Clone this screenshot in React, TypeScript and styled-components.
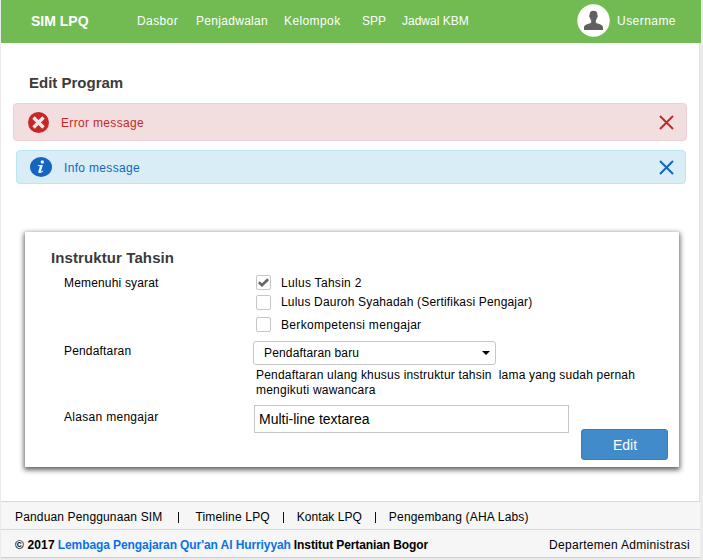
import React from "react";
import styled, { createGlobalStyle } from "styled-components";

const GlobalStyle = createGlobalStyle`
  * { box-sizing: border-box; }
  body { margin: 0; background: #ececec; overflow: hidden; font: 12px/15px "Liberation Sans", Arial, sans-serif; color: #000; }
  svg { display: block; flex: none; }
`;

const Window = styled.div`
  width: 703px;
  height: 560px;
  padding: 0 2px 0 1px;
  display: flex;
  flex-direction: column;
  background: #ebebeb;
`;

const Text = styled.span<{ $ls?: number }>`
  letter-spacing: ${(p) => p.$ls ?? 0}px;
  white-space: pre;
`;

const Header = styled.header`
  height: 43px;
  flex: none;
  background: #72bb53;
  color: #fff;
  display: flex;
  align-items: center;
  padding: 0 25px 2px 30px;
`;

const Brand = styled.div`
  width: 106px;
  padding-top: 2px;
  font-size: 14px;
  font-weight: bold;
`;

const Nav = styled.nav`
  display: flex;
  flex: 1;
  padding-top: 2px;
`;

const NavItem = styled.a<{ $w: number }>`
  width: ${(p) => p.$w}px;
`;

const User = styled.div`
  display: flex;
  align-items: center;
  gap: 7px;
`;

const UserName = styled(Text)`
  padding-top: 2px;
`;

const Page = styled.main`
  height: 458px;
  flex: none;
  margin-right: 1px;
  border-right: 1px solid #e2e2e2;
  background: #fff;
  padding: 31px 0 0;
  display: flex;
  flex-direction: column;
`;

const Title = styled.h1`
  margin: 0 0 11px 28px;
  font-size: 15px;
  line-height: 18px;
  color: #3b3b3b;
`;

const Alert = styled.div<{ $error?: boolean }>`
  height: ${(p) => (p.$error ? 38 : 34)}px;
  margin: ${(p) => (p.$error ? "0 12px 9px 12px" : "0 13px 48px 15px")};
  padding: ${(p) => (p.$error ? "0 12px 0 14px" : "0 11px 0 13px")};
  display: flex;
  align-items: center;
  border: 1px solid ${(p) => (p.$error ? "#ebcfd4" : "#b9e6f0")};
  border-radius: 4px;
  background: ${(p) => (p.$error ? "#f2dede" : "#d9edf7")};
  color: ${(p) => (p.$error ? "#c62828" : "#1565c0")};
`;

const AlertText = styled(Text)`
  flex: 1;
  margin-left: 12px;
  padding-top: 2px;
`;

const Card = styled.section`
  width: 654px;
  height: 235px;
  margin-left: 24px;
  padding: 17px 11px 7px 26px;
  display: flex;
  flex-direction: column;
  background: #fff;
  box-shadow: 0 2px 5px 1px rgba(0, 0, 0, 0.62);
`;

const CardTitle = styled.h2`
  margin: 0;
  font-size: 15px;
  line-height: 18px;
  letter-spacing: 0.1px;
  color: #3b3b3b;
`;

const Row = styled.div<{ $h: number }>`
  height: ${(p) => p.$h}px;
  display: flex;
  padding-left: 13px;
`;

const Label = styled.div<{ $top: number }>`
  width: 189px;
  flex: none;
  padding-top: ${(p) => p.$top}px;
`;

const Checks = styled.div`
  padding: 8px 0 0 3px;
`;

const CheckRow = styled.label<{ $h: number }>`
  height: ${(p) => p.$h}px;
  display: flex;
  align-items: flex-start;
  gap: 10px;
`;

const CheckText = styled(Text)<{ $top: number }>`
  padding-top: ${(p) => p.$top}px;
`;

const Box = styled.span`
  width: 15px;
  height: 15px;
  border: 1px solid #c6c6c6;
  border-radius: 2px;
  display: flex;
  align-items: center;
  justify-content: center;
`;

const Select = styled.div`
  width: 243px;
  height: 24px;
  border: 1px solid #c6c6c6;
  border-radius: 3px;
  display: flex;
  align-items: center;
  justify-content: space-between;
  padding: 0 5px 0 10px;
`;

const Help = styled.div`
  padding: 3px 0 0 3px;
  display: flex;
  flex-direction: column;
`;

const TextArea = styled.div`
  width: 315px;
  height: 28px;
  margin-left: 1px;
  border: 1px solid #c6c6c6;
  padding: 6px 4px;
  font-size: 14px;
`;

const Button = styled.button`
  width: 87px;
  height: 31px;
  margin: auto 0 0 auto;
  padding: 1px 0 0 1px;
  border: 1px solid #357ebd;
  border-radius: 3px;
  background: #428bca;
  color: #fff;
  font: 14px "Liberation Sans", Arial, sans-serif;
`;

const Footer = styled.footer`
  width: 699px;
  height: 57px;
  border-bottom: 1px solid #cfcfcf;
  background: #f6f6f6;
`;

const FooterRow = styled.div`
  height: 28px;
  border-top: 1px solid #d9d9d9;
  display: flex;
  align-items: center;
  padding: 3px 10px 0 14px;
`;

const Divider = styled.span<{ $l: number; $r: number }>`
  width: 1px;
  height: 11px;
  margin: 0 ${(p) => p.$r}px 0 ${(p) => p.$l}px;
  background: #111;
`;

const Copyright = styled.strong`
  flex: 1;
  display: flex;
  gap: 3px;
`;

const Link = styled(Text)`
  color: #0971e8;
`;

const Close = () => (
  <svg width="15" height="15" viewBox="0 0 15 15" stroke="currentColor" strokeWidth="2">
    <path d="M1 1 14 14M14 1 1 14" />
  </svg>
);

const Avatar = () => (
  <svg width="33" height="33" viewBox="0 0 33 33">
    <circle cx="16.5" cy="16.5" r="16.2" fill="#fff" />
    <path
      fill="#606060"
      d="M16.500 6.800c2.700 0 4 1.300 3.900 4.200.7.500.4 2.300-.4 2.800-.3 1.400-.7 2.200-1.200 2.700v2c1.200 1.500 7.200 1.500 7.200 5V26H7v-2.500c0-3.500 6-3.500 7.200-5v-2c-.5-.5-.9-1.300-1.200-2.700-.8-.5-1.100-2.300-.4-2.800-.1-2.900 1.200-4.200 3.900-4.200Z"
    />
  </svg>
);

const ErrorIcon = () => (
  <svg width="21" height="21" viewBox="0 0 21 21">
    <circle cx="10.5" cy="10.5" r="10.5" fill="#c62828" />
    <path d="M5.500 5.500l10 10M15.500 5.500l-10 10" stroke="#f6e4e4" strokeWidth="3.400" />
  </svg>
);

const InfoIcon = () => (
  <svg width="22" height="20" viewBox="0 0 22 20">
    <ellipse cx="11" cy="10" rx="11" ry="10" fill="#1565c0" />
    <circle cx="12.300" cy="5" r="1.700" fill="#e8f3fa" />
    <path
      d="M8 8.100h4.900l-1.800 6c-.1.600.5.400 1.900-.6l.4.500c-2.500 2.700-5.700 2.700-5 .2l1.400-4.700c.1-.5-.8-.6-2-.6Z"
      fill="#e8f3fa"
    />
  </svg>
);

const CheckMark = () => (
  <svg width="11" height="9" viewBox="0 0 11 9" fill="none" stroke="#666" strokeWidth="2.600">
    <path d="M.9 4.200 4 7.200 10.100 1.200" />
  </svg>
);

const navItems = [
  { label: "Dasbor", w: 59, ls: 0.4 },
  { label: "Penjadwalan", w: 88, ls: 0.3 },
  { label: "Kelompok", w: 78, ls: 0.4 },
  { label: "SPP", w: 40, ls: 0 },
  { label: "Jadwal KBM", w: 90, ls: 0 },
];

const requirements = [
  { label: "Lulus Tahsin 2", h: 20, top: 1, ls: 0.3, checked: true },
  { label: "Lulus Dauroh Syahadah (Sertifikasi Pengajar)", h: 22, top: 0, ls: 0.18, checked: false },
  { label: "Berkompetensi mengajar", h: 24, top: 1, ls: 0.32, checked: false },
];

export default function App() {
  return (
    <Window>
      <GlobalStyle />
      <Header>
        <Brand>SIM LPQ</Brand>
        <Nav>
          {navItems.map((n) => (
            <NavItem key={n.label} $w={n.w}>
              <Text $ls={n.ls}>{n.label}</Text>
            </NavItem>
          ))}
        </Nav>
        <User>
          <Avatar />
          <UserName $ls={0.45}>Username</UserName>
        </User>
      </Header>
      <Page>
        <Title>Edit Program</Title>
        <Alert $error>
          <ErrorIcon />
          <AlertText $ls={0.33}>Error message</AlertText>
          <Close />
        </Alert>
        <Alert>
          <InfoIcon />
          <AlertText $ls={0.33}>Info message</AlertText>
          <Close />
        </Alert>
        <Card>
          <CardTitle>Instruktur Tahsin</CardTitle>
          <Row $h={74}>
            <Label $top={9}>
              <Text $ls={0.17}>Memenuhi syarat</Text>
            </Label>
            <Checks>
              {requirements.map((r) => (
                <CheckRow key={r.label} $h={r.h}>
                  <Box>{r.checked && <CheckMark />}</Box>
                  <CheckText $ls={r.ls} $top={r.top}>
                    {r.label}
                  </CheckText>
                </CheckRow>
              ))}
            </Checks>
          </Row>
          <Row $h={64}>
            <Label $top={3}>
              <Text $ls={0.17}>Pendaftaran</Text>
            </Label>
            <div>
              <Select>
                <Text $ls={0.15}>Pendaftaran baru</Text>
                <svg width="8" height="4" viewBox="0 0 8 4">
                  <path d="M0 0h8L4 4Z" />
                </svg>
              </Select>
              <Help>
                <Text $ls={0.195}>Pendaftaran ulang khusus instruktur tahsin  lama yang sudah pernah</Text>
                <Text $ls={0.22}>mengikuti wawancara</Text>
              </Help>
            </div>
          </Row>
          <Row $h={24}>
            <Label $top={5}>
              <Text $ls={0.3}>Alasan mengajar</Text>
            </Label>
            <TextArea>Multi-line textarea</TextArea>
          </Row>
          <Button>Edit</Button>
        </Card>
      </Page>
      <Footer>
        <FooterRow>
          <Text $ls={0.15}>Panduan Penggunaan SIM</Text>
          <Divider $l={16} $r={16} />
          <Text $ls={0.18}>Timeline LPQ</Text>
          <Divider $l={13} $r={13} />
          <Text $ls={0.03}>Kontak LPQ</Text>
          <Divider $l={13} $r={13} />
          <Text $ls={0.18}>Pengembang (AHA Labs)</Text>
        </FooterRow>
        <FooterRow>
          <Copyright>
            <Text $ls={0.15}>© 2017</Text>
            <Link $ls={-0.09}>Lembaga Pengajaran Qur'an Al Hurriyyah</Link>
            <Text $ls={-0.1}>Institut Pertanian Bogor</Text>
          </Copyright>
          <Text $ls={0.3}>Departemen Administrasi</Text>
        </FooterRow>
      </Footer>
    </Window>
  );
}
